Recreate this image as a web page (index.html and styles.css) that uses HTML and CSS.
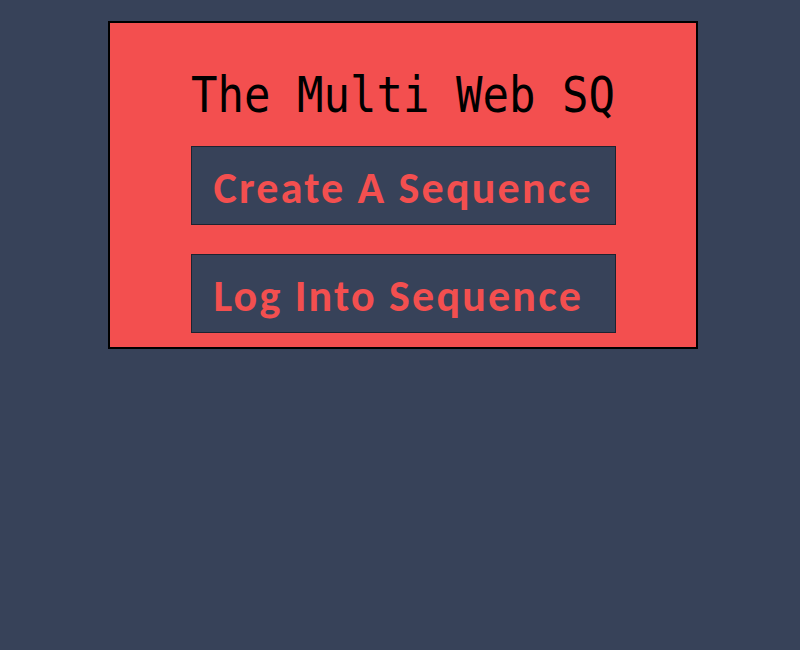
FILE: index.html
```html
<!DOCTYPE html>
<html>
<head>
<meta charset="utf-8">
<link rel="stylesheet" href="styles.css">
</head>
<body>
<div class="card">
  <h1 class="title"><span class="title-text">The Multi Web SQ</span></h1>
  <div class="btn">Create A Sequence</div>
  <div class="btn">Log Into Sequence</div>
</div>
</body>
</html>
```
FILE: styles.css
```css
html, body {
  margin: 0;
  padding: 0;
  background: #374259;
  height: 100%;
}
body {
  padding: 21px 0 0 108px;
  box-sizing: border-box;
}
.card {
  width: 590px;
  height: 328px;
  box-sizing: border-box;
  background: #f34f4f;
  border: 2px solid #000;
  display: flex;
  flex-direction: column;
  align-items: center;
  padding-top: 40px;
}
.title {
  margin: 0 0 19px 0;
  font-family: "DejaVu Sans Mono", monospace;
  font-weight: normal;
  font-size: 44px;
  line-height: 64px;
  color: #000;
  flex-shrink: 0;
}
.title-text {
  display: inline-block;
  transform: scaleY(1.12);
}
.btn {
  flex-shrink: 0;
  width: 425px;
  height: 79px;
  box-sizing: border-box;
  background: #374259;
  border: 1px solid #1e2330;
  color: #f34f4f;
  font-family: Carlito, Lato, sans-serif;
  font-weight: bold;
  font-size: 44px;
  letter-spacing: 2.2px;
  line-height: 83px;
  padding-left: 22px;
  margin-bottom: 29px;
  overflow: hidden;
}
.btn:last-child {
  margin-bottom: 0;
}
```
